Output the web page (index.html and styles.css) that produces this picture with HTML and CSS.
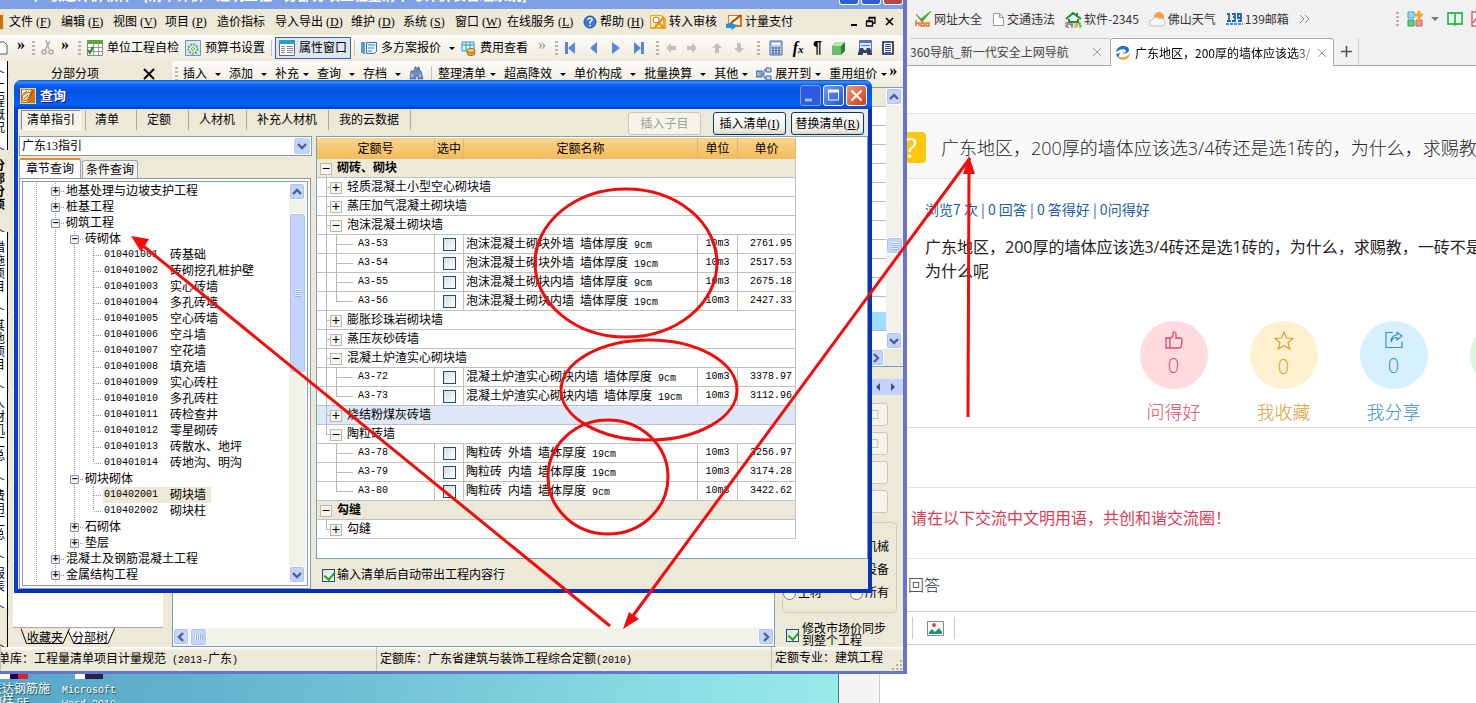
FILE: index.html
```html
<!DOCTYPE html>
<html lang="zh-CN">
<head>
<meta charset="utf-8">
<title>查询</title>
<link rel="stylesheet" href="styles.css">
</head>
<body>
<svg class="defs" width="0" height="0" aria-hidden="true">
  <defs>
    <symbol id="up" viewBox="0 0 16 16"><path d="M4 10l4-4 4 4" fill="none" stroke="#4d6185" stroke-width="2.4"/></symbol>
    <symbol id="down" viewBox="0 0 16 16"><path d="M4 6l4 4 4-4" fill="none" stroke="#4d6185" stroke-width="2.4"/></symbol>
    <symbol id="left" viewBox="0 0 16 16"><path d="M10 4l-4 4 4 4" fill="none" stroke="#4d6185" stroke-width="2.4"/></symbol>
    <symbol id="right" viewBox="0 0 16 16"><path d="M6 4l4 4-4 4" fill="none" stroke="#4d6185" stroke-width="2.4"/></symbol>
    <symbol id="edit" viewBox="0 0 16 16"><path d="M0 0h16v16H0z" fill="#f7d58a"/><path d="M1 1h14v14H1z" fill="#c8741a"/><path d="M2 2h9L8 14H2z" fill="#fdf3d8"/><path d="M2 8l6-4 3 1-4 7-4 1z" fill="#fbe2b0" stroke="#8a4c10" stroke-width=".8"/><path d="M3 6l4-3M4 11l4-4M13 3L7 14" fill="none" stroke="#9b5a14"/></symbol>
    <symbol id="eye" viewBox="0 0 16 16"><path d="M2 5h3l1-4h1l1 4 1-4h1l1 4h1l2 8H9v-3H7v3H1z" fill="#6e8cc0" stroke="#3f5a94" stroke-width=".7"/><path d="M3 8v3M11 8v3" stroke="#dde8fa"/></symbol>
  </defs>
</svg>

<main class="desktop">
  <div class="shortcuts">
    <a class="shortcut shortcut-cut" href="#"><i class="chip chip-red"></i>广联达钢筋施<br>工抽样 <span class="n">GF</span></a>
    <a class="shortcut" href="#"><i class="chip"></i><span class="n">Microsoft<br>Word 2010</span></a>
  </div>
  <div class="backdrop"></div>

  <section class="browser">
    <nav class="bookmarks">
      <a href="#"><svg width="17" height="16" viewBox="0 0 17 16"><path d="M1 3l5 5 10-8-9 11z" fill="#52a92e" stroke="#52a92e"/><path d="M1 9v6M1 12h3v3M6 12h3v3H6zM11 12h3v3h-3z" fill="none" stroke="#ec6a2c" stroke-width="1.4"/></svg>网址大全</a>
      <a href="#"><svg width="13" height="15" viewBox="0 0 13 15"><path d="M1.500 1.500h6l4 4v8h-10zM7.500 1.500v4h4" fill="#fff" stroke="#999"/></svg>交通违法</a>
      <a href="#"><svg width="17" height="17" viewBox="0 0 17 17"><path d="M1 8l7-6 8 6M4 8v3h9V8M12 2v3" fill="none" stroke="#258a33" stroke-width="2"/><path d="M0 12h3v2H1v2h3" fill="none" stroke="#d22"/><path d="M5 12v2h3M7 12v5" fill="none" stroke="#17a"/><path d="M9 12h3v2H9M9 16h3v-2" fill="none" stroke="#e80"/><path d="M16 12h-2v2h2v2h-2" fill="none" stroke="#2a3"/></svg>软件-2345</a>
      <a href="#"><svg width="17" height="16" viewBox="0 0 17 16"><circle cx="10" cy="6" r="5" fill="#f7a23b"/><path d="M3 15a3 3 0 010-6 4 4 0 017-1 3.500 3.500 0 014 7z" fill="#f4f6fa" stroke="#b9c2d0"/></svg>佛山天气</a>
      <a href="#"><svg width="17" height="14" viewBox="0 0 17 14"><path d="M1 2h2v7M1 9h4M6 2h3v3H7h2v4H6M15 6h-3V2h3v7h-3" fill="none" stroke="#1769b5" stroke-width="1.800"/><path d="M0 12h17" stroke="#3d8fd6" stroke-width="2" stroke-dasharray="3 1"/></svg>139邮箱</a>
      <button class="more" type="button" aria-label="更多书签"><svg width="11" height="10" viewBox="0 0 11 10"><path d="M1 1l4 4-4 4M6 1l4 4-4 4" fill="none" stroke="#888"/></svg></button>
      <div class="exts">
        <i class="grip"></i>
        <svg width="16" height="16" viewBox="0 0 16 16"><path d="M1 1h6v6H1z" fill="#9fd8f5" stroke="#3aa2da"/><path d="M1 9h6v6H1z" fill="#5fd48a" stroke="#23a455"/><path d="M9 9h6v6H9z" fill="#f69a90" stroke="#dc5a4c"/><path d="M12 0v8M8 4h8" stroke="#f3a81c" stroke-width="3"/></svg>
        <svg width="8" height="6" viewBox="0 0 8 6"><path d="M0 1h8L4 5z" fill="#777"/></svg>
        <svg width="16" height="16" viewBox="0 0 16 16"><path d="M1 2h6l1 1 1-1h6v11H9l-1 1-1-1H1zM8 3v11" fill="#eafbee" stroke="#2fbd55" stroke-width="1.800"/></svg>
        <svg width="5" height="16" viewBox="0 0 5 16"><path d="M6 1H1v14h5M2 12l5-7" fill="#fff" stroke="#e2605a" stroke-width="1.500"/></svg>
      </div>
    </nav>
    <div class="tabs">
      <div class="tab"><span>360导航_新一代安全上网导航</span><button type="button" aria-label="关闭"><svg width="10" height="10" viewBox="0 0 10 10"><path d="M1 1l8 8M9 1L1 9" stroke="#999"/></svg></button></div>
      <div class="tab tab-on"><svg width="17" height="16" viewBox="0 0 17 16"><path d="M1 7c1-8 13-7 13-2 0 3-4 4-7 3 3 0 4-1 4-2 0-3-7-2-10 1z" fill="#1976c5"/><path d="M2 11c3 6 12 5 13-3-2 4-8 6-13 3z" fill="#f4a11f"/><path d="M1 9l4-1-2 5z" fill="#1976c5"/></svg><span class="tab-name">广东地区，200厚的墙体应该选3/</span><button type="button" aria-label="关闭"><svg width="10" height="10" viewBox="0 0 10 10"><path d="M1 1l8 8M9 1L1 9" stroke="#999"/></svg></button></div>
      <button class="tab-add" type="button" aria-label="新标签"><svg width="11" height="11" viewBox="0 0 11 11"><path d="M5.500 0v11M0 5.500h11" stroke="#555" stroke-width="1.600"/></svg></button>
    </div>
    <article class="page">
      <header class="question">
        <span class="badge">?</span>
        <h1>广东地区，200厚的墙体应该选3/4砖还是选1砖的，为什么，求赐教</h1>
      </header>
      <div class="detail">
        <p class="stats">浏览7 次 | 0 回答 | 0 答得好 | 0问得好</p>
        <p class="body">广东地区，200厚的墙体应该选3/4砖还是选1砖的，为什么，求赐教，一砖不是<br>为什么呢</p>
      </div>
      <div class="votes">
        <button class="vote red" type="button"><span class="disc"><svg width="18" height="18" viewBox="0 0 18 18"><path d="M1 7h4v10H1zM5 8l3-3V2c0-2 3-1 3 1v4h4c2 0 2 1 2 3l-1 6-2 1H5" fill="none" stroke="currentColor" stroke-width="1.300"/></svg>0</span>问得好</button>
        <button class="vote gold" type="button"><span class="disc"><svg width="20" height="19" viewBox="0 0 20 19"><path d="M10 1l2.500 6 6.500.5-5 4 1.800 6.500-5.800-3.500L4.200 18 6 11.500l-5-4L7.500 7z" fill="none" stroke="currentColor" stroke-width="1.200"/></svg>0</span>我收藏</button>
        <button class="vote blue" type="button"><span class="disc"><svg width="18" height="18" viewBox="0 0 18 18"><path d="M8 1.500H1v15h16v-6M6 11c0-4 2-7 6-7V1.500L17 5l-5 4V6.500c-3 0-5 1-6 4.500z" fill="none" stroke="currentColor" stroke-width="1.200"/></svg>0</span>我分享</button>
        <button class="vote green" type="button" aria-label="更多"><span class="disc"></span></button>
      </div>
      <p class="notice">请在以下交流中文明用语，共创和谐交流圈！</p>
      <h2 class="reply">我来回答</h2>
      <div class="editor"><button type="button" aria-label="图片"><svg width="17" height="15" viewBox="0 0 17 15"><path d="M.5.5h16v14H.5z" fill="#fff" stroke="#888"/><circle cx="7" cy="4" r="2" fill="#e4432f"/><path d="M2 13v-2l3-3 3 3 4-4 3 4v2z" fill="#17986a"/></svg></button></div>
    </article>
  </section>

  <section class="app">
    <div class="app-title"><span>广联达计价软件 - [清单计价 - 建筑工程 - 分部分项工程量清单与计价表管理系统]</span><div class="caps"><i></i><i></i><i class="r"></i></div></div>
    <nav class="menu">
      <svg class="menu-logo" width="4" height="16" viewBox="12 0 4 16"><use href="#edit" width="16" height="16"/></svg>
      <button type="button">文件<s>(<u>F</u>)</s></button><button type="button">编辑<s>(<u>E</u>)</s></button><button type="button">视图<s>(<u>V</u>)</s></button><button type="button">项目<s>(<u>P</u>)</s></button><button type="button" class="m-plain">造价指标</button><button type="button" class="m-wide">导入导出<s>(<u>D</u>)</s></button><button type="button">维护<s>(<u>D</u>)</s></button><button type="button">系统<s>(<u>S</u>)</s></button><button type="button">窗口<s>(<u>W</u>)</s></button><button type="button" class="m-wide">在线服务<s>(<u>L</u>)</s></button>
      <button type="button" class="m-help"><svg width="14" height="14" viewBox="0 0 14 14"><circle cx="7" cy="7" r="6" fill="#3c78d4" stroke="#1d4c9c"/><path d="M5 5c0-3 5-2 4 0L7 7v1.500M7 10v1.500" fill="none" stroke="#fff" stroke-width="1.500"/></svg>帮助<s>(<u>H</u>)</s></button>
      <button type="button" class="m-wide"><svg width="16" height="16" viewBox="0 0 16 16"><path d="M0 1h12l4 4v10H0z" fill="#f4a62b"/><path d="M1 2h10l2 3v8H1z" fill="#fdebb8"/><circle cx="6" cy="6" r="3" fill="#fff" stroke="#b87a1e"/><path d="M5 13l9-10M9 9l5 5" stroke="#e0901a" stroke-width="2"/></svg>转入审核</button>
      <button type="button" class="m-wide"><svg width="16" height="16" viewBox="0 0 16 16"><path d="M2 1h14v12H2z" fill="#e6701c"/><path d="M3 2h11v9H3z" fill="#fff3d4"/><path d="M5 9l10-8" stroke="#a5430b" stroke-width="2"/><path d="M0 10l7-2v2l5 1-6 5-1-2H0z" fill="#2d8bd0"/></svg>计量支付</button>
      <div class="mdi"><svg width="44" height="12" viewBox="0 0 44 12"><path d="M0 9h6" stroke="#000" stroke-width="2"/><path d="M18 4V1.500h6V7h-2M15.500 5.500h6V10h-6zM15 5h7M18 2h6" fill="none" stroke="#000" stroke-width="1.300"/><path d="M35 2l7 7M42 2l-7 7" stroke="#000" stroke-width="1.600"/></svg></div>
    </nav>
    <div class="toolbar">
      <div class="band b1"><svg width="8" height="14" viewBox="0 0 8 14"><path d="M0 1h4l3 3v9H0" fill="#fff" stroke="#556"/></svg><b>»</b></div>
      <div class="band b2"><i class="grip"></i><svg width="14" height="16" viewBox="0 0 14 16"><path d="M5 0l3 9M9 1L4 10" stroke="#aaa" stroke-width="1.500"/><circle cx="3" cy="12" r="2" fill="none" stroke="#aaa" stroke-width="1.500"/><circle cx="10" cy="12" r="2" fill="none" stroke="#aaa" stroke-width="1.500"/></svg><b>»</b></div>
      <div class="band b3"><i class="grip"></i>
        <button type="button"><svg width="16" height="16" viewBox="0 0 16 16"><path d="M.5.5h15v15H.5z" fill="#fff" stroke="#888"/><path d="M0 0h16v4H0z" fill="#5aab32"/><path d="M1 7.500h14M1 11.500h14M6.500 4v11M11.500 4v11" stroke="#999"/><path d="M1 10l2 3 3-6" fill="none" stroke="#2e8a1c" stroke-width="2"/></svg>单位工程自检</button>
        <button type="button"><svg width="16" height="16" viewBox="0 0 16 16"><path d="M.5.5h15v15H.5z" fill="#d7e8f5" stroke="#6c94b8"/><circle cx="8" cy="9" r="4.500" fill="#e8f6e4" stroke="#68a56a" stroke-width="2" stroke-dasharray="2 1"/><circle cx="8" cy="9" r="1.500" fill="none" stroke="#68a56a"/></svg>预算书设置</button>
        <i class="sep"></i>
        <button type="button" class="pressed"><svg width="16" height="16" viewBox="0 0 16 16"><path d="M.5.5h15v15H.5z" fill="#fff" stroke="#667"/><path d="M0 0h16v4H0z" fill="#25a0c8"/><path d="M2 6.500h4M2 8.500h4M2 10.500h4M2 12.500h4M8 6.500h6M8 8.500h6M8 10.500h6M8 12.500h6" stroke="#889"/></svg>属性窗口</button>
        <i class="sep"></i>
        <button type="button"><svg width="16" height="14" viewBox="0 0 16 14"><path d="M1 1v11M3 1v12" stroke="#287fc0" stroke-width="1.500"/><path d="M5.500 1.500h10v9l-2 2h-8z" fill="#eaf3fb" stroke="#2a78b8"/><path d="M7 4h7M7 7h6M7 10h4" stroke="#3a86c4"/></svg>多方案报价<i class="caret"></i></button>
        <button type="button"><svg width="15" height="15" viewBox="0 0 15 15"><path d="M1 1h12v9H1z" fill="#d5effb" stroke="#3796bd"/><path d="M1 4h12M5 1v9M9 1v9" stroke="#3796bd"/><ellipse cx="10" cy="12" rx="4" ry="2.500" fill="#e7a73b" stroke="#a56c13"/><ellipse cx="10" cy="9.500" rx="4" ry="2" fill="#f6cc72" stroke="#a56c13"/></svg>费用查看</button>
        <b class="dim">»</b>
      </div>
      <div class="band b4"><i class="grip"></i><svg width="92" height="14" viewBox="0 0 92 14" fill="#5b86dd"><path d="M1 1h3v12H1zM11 1v12L4 7zM33 1v12l-7-6zM48 1v12l8-6zM70 1v12l7-6zM77 1h3v12h-3z"/></svg></div>
      <div class="band b4"><i class="grip"></i><svg width="86" height="14" viewBox="0 0 86 14" fill="#c2c0b8"><path d="M1 7l5-5v3h5v4H6v3zM32 7l-5-5v3h-5v4h5v3zM52 2l5 5h-3v5h-4V7h-3zM74 12l5-5h-3V2h-4v5h-3z"/></svg></div>
      <div class="band b5"><i class="grip"></i>
        <svg width="14" height="16" viewBox="0 0 14 16"><path d="M1 1h12v14H1z" fill="#b8ccf0" stroke="#4a68a8"/><path d="M3 3h8v2H3z" fill="#fff"/><path d="M3 8h8M3 10.500h8M3 13h8" stroke="#35528f" stroke-dasharray="2 1" stroke-width="1.500"/></svg>
        <span class="fx">f<small>x</small></span><span class="pilcrow">¶</span>
        <svg width="15" height="15" viewBox="0 0 15 15"><path d="M1 5l4-4h9v9l-4 4H1z" fill="#2b7d33"/><path d="M1 5h9v9H1z" fill="#68bf6c"/><path d="M1 5l4-4h9l-4 4z" fill="#b7e3b5"/></svg>
        <svg width="17" height="16" viewBox="0 0 17 16"><path d="M3.500.5h12v11h-12z" fill="#dfe8fa" stroke="#5777ba"/><path d="M3 1h13v2H3z" fill="#5777ba"/><path d="M5 5.500h9" stroke="#5777ba"/><path d="M4 8h3l1 2h2l1-2h3l2 5v2h-5v-2H7v2H2v-2z" fill="#34435f"/></svg>
        <svg width="12" height="14" viewBox="0 0 12 14"><path d="M1 1h10v12H1z" fill="#fff" stroke="#223" stroke-width="1.600"/><path d="M3 3.500h6M3 5.500h6M3 7.500h6M3 9.500h6M3 11.500h6" stroke="#1a2fa8" stroke-width=".9"/></svg>
      </div>
    </div>

    <div class="work">
      <div class="side">
        <div class="st s0"></div><div class="st s1"><span>工程概况</span></div><div class="st s2 on"><span>分部分项</span></div><div class="st s3"><span>措施项目</span></div><div class="st s3"><span>其他项目</span></div><div class="st s4"><span>人材机汇总</span></div><div class="st s3"><span>费用汇总</span></div><div class="st s5"><span>报表</span></div><div class="st sx"></div>
      </div>
      <div class="leftpane">
        <div class="pane-head"><span>分部分项</span><svg width="12" height="12" viewBox="0 0 12 12"><path d="M1 1l10 10M11 1L1 11" stroke="#000" stroke-width="2"/></svg></div>
        <div class="pane-body"></div>
        <div class="sheet-tabs"><svg width="100" height="16" viewBox="0 0 100 16"><path d="M46 .5L53 15.500H87L93.500.5" fill="#fff" stroke="#000"/><path d="M0 .5L5.500 15.500H42L48.500.5" fill="#ece9d8" stroke="#000"/></svg><button type="button">收藏夹</button><button type="button">分部树</button></div>
      </div>
      <div class="center">
        <div class="tools2"><i class="grip"></i>
          <button type="button">插入<i class="caret"></i></button><button type="button">添加<i class="caret"></i></button><button type="button" class="tight">补充<i class="caret"></i></button><button type="button">查询<i class="caret"></i></button><button type="button">存档<i class="caret"></i></button>
          <svg width="16" height="16"><use href="#eye"/></svg><i class="sep"></i>
          <button type="button" class="tight">整理清单<i class="caret"></i></button><button type="button">超高降效<i class="caret"></i></button><button type="button">单价构成<i class="caret"></i></button><button type="button">批量换算<i class="caret"></i></button><button type="button" class="tight">其他<i class="caret"></i></button><button type="button" class="tight"><svg width="16" height="14" viewBox="0 0 16 14"><path d="M0 4h6v6H0z" fill="#8fb1e8" stroke="#3b61a8"/><path d="M10 1h5v4h-5zM10 9h5v4h-5z" fill="#c9dbf8" stroke="#3b61a8"/><path d="M6 7h2V3h2M8 7v4h2" fill="none" stroke="#3b61a8"/></svg>展开到<i class="caret"></i></button><button type="button" class="tight last-tool">重用组价<i class="caret"></i></button><b>»</b>
        </div>
        <div class="upper">
          <div class="rows"><i></i><i></i><i></i><i></i><i></i><i></i><i></i><i></i><i></i><i></i><i></i><i></i><i class="hl"></i></div>
          <div class="vscroll up-scroll"><button type="button" aria-label="上"><svg width="16" height="16"><use href="#up"/></svg></button><div class="track"><i class="thumb"></i></div><button type="button" aria-label="下"><svg width="16" height="16"><use href="#down"/></svg></button></div>
        </div>
        <div class="hrow"><button type="button" class="sb" aria-label="右"><svg width="16" height="16"><use href="#right"/></svg></button></div>
        <div class="spin"><svg width="36" height="16" viewBox="0 0 36 16"><path d="M0 0h36v16H0z" fill="#c3d3fd"/><path d="M13 4v8L9 8zM24 4v8l4-4z" fill="#3f4f78"/></svg></div>
        <div class="lower">
          <div class="sheet"><div class="hscroll"><button type="button" aria-label="左"><svg width="16" height="16"><use href="#left"/></svg></button><i class="thumb"></i><span></span><button type="button" aria-label="右"><svg width="16" height="16"><use href="#right"/></svg></button></div></div>
          <div class="props">
            <button class="pb" type="button" disabled>□</button><button class="pb" type="button" disabled>□</button><button class="pb" type="button" disabled></button><button class="pb" type="button" disabled></button>
            <fieldset><label class="end">机械</label><label class="end">设备</label><div class="pair"><label><input type="radio" name="kind">主材</label><label><input type="radio" name="kind">所有</label></div></fieldset>
            <label class="sync"><input type="checkbox" class="xp" checked><span>修改市场价同步<br>到整个工程</span></label>
          </div>
        </div>
      </div>
    </div>
    <footer class="status"><div class="p1"><span>清单库：工程量清单项目计量规范<span class="n"> (2013-</span>广东<span class="n">)</span></span></div><div class="p2">定额库：广东省建筑与装饰工程综合定额<span class="n">(2010)</span></div><div class="p3">定额专业：建筑工程<svg width="12" height="12" viewBox="0 0 12 12"><path d="M9 1h2v2H9zM9 5h2v2H9zM9 9h2v2H9zM5 5h2v2H5zM5 9h2v2H5zM1 9h2v2H1z" fill="#b8b4a2"/></svg></div></footer>
  </section>

  <section class="dialog" role="dialog" aria-label="查询">
    <header class="dlg-title"><svg width="16" height="16"><use href="#edit"/></svg><h2>查询</h2>
      <button type="button" class="min" aria-label="最小化"><svg width="19" height="19" viewBox="0 0 19 19"><path d="M4 14h7" stroke="#9db8f5" stroke-width="3"/></svg></button>
      <button type="button" aria-label="最大化"><svg width="19" height="19" viewBox="0 0 19 19"><path d="M4.500 5h10v9h-10z" fill="none" stroke="#fff"/><path d="M4 5h11" stroke="#fff" stroke-width="3"/></svg></button>
      <button type="button" class="close" aria-label="关闭"><svg width="19" height="19" viewBox="0 0 19 19"><path d="M4.500 4.500l10 10M14.500 4.500l-10 10" stroke="#fff" stroke-width="2.200"/></svg></button></header>
    <div class="dlg-bar">
      <nav><button type="button" class="on">清单指引</button><button type="button">清单</button><button type="button">定额</button><button type="button">人材机</button><button type="button">补充人材机</button><button type="button">我的云数据</button></nav>
      <div class="actions"><button type="button" class="act a1" disabled>插入子目</button><button type="button" class="act">插入清单(<u>I</u>)</button><button type="button" class="act">替换清单(<u>R</u>)</button></div>
    </div>
    <div class="dlg-body">
      <div class="dlg-left">
        <div class="combo"><select aria-label="指引"><option>广东13指引</option></select><svg width="16" height="16"><use href="#down"/></svg></div>
        <div class="subtabs"><button type="button" class="on">章节查询</button><button type="button">条件查询</button></div>
        <div class="tree-frame"><div class="tree">
          <ul>
            <li class="l1"><button type="button">+</button>地基处理与边坡支护工程</li>
            <li class="l1"><button type="button">+</button>桩基工程</li>
            <li class="l1"><button type="button">−</button>砌筑工程</li>
            <li class="l2"><button type="button">−</button>砖砌体</li>
            <li class="l3"><span class="n">010401001  </span>砖基础</li>
            <li class="l3"><span class="n">010401002  </span>砖砌挖孔桩护壁</li>
            <li class="l3"><span class="n">010401003  </span>实心砖墙</li>
            <li class="l3"><span class="n">010401004  </span>多孔砖墙</li>
            <li class="l3"><span class="n">010401005  </span>空心砖墙</li>
            <li class="l3"><span class="n">010401006  </span>空斗墙</li>
            <li class="l3"><span class="n">010401007  </span>空花墙</li>
            <li class="l3"><span class="n">010401008  </span>填充墙</li>
            <li class="l3"><span class="n">010401009  </span>实心砖柱</li>
            <li class="l3"><span class="n">010401010  </span>多孔砖柱</li>
            <li class="l3"><span class="n">010401011  </span>砖检查井</li>
            <li class="l3"><span class="n">010401012  </span>零星砌砖</li>
            <li class="l3"><span class="n">010401013  </span>砖散水、地坪</li>
            <li class="l3 last"><span class="n">010401014  </span>砖地沟、明沟</li>
            <li class="l2"><button type="button">−</button>砌块砌体</li>
            <li class="l3"><mark><span class="n">010402001  </span>砌块墙</mark></li>
            <li class="l3 last"><span class="n">010402002  </span>砌块柱</li>
            <li class="l2"><button type="button">+</button>石砌体</li>
            <li class="l2"><button type="button">+</button>垫层</li>
            <li class="l1"><button type="button">+</button>混凝土及钢筋混凝土工程</li>
            <li class="l1"><button type="button">+</button>金属结构工程</li>
          </ul>
          <div class="vscroll tree-scroll"><button type="button" aria-label="上"><svg width="16" height="16"><use href="#up"/></svg></button><div class="track"><i class="thumb"></i></div><button type="button" aria-label="下"><svg width="16" height="16"><use href="#down"/></svg></button></div>
        </div></div>
      </div>
      <div class="dlg-right">
        <div class="grid">
          <table>
            <colgroup><col class="c1"><col class="c2"><col class="c3"><col class="c4"><col class="c5"></colgroup>
            <thead><tr><th>定额号</th><th>选中</th><th>定额名称</th><th>单位</th><th>单价</th></tr></thead>
            <tbody>
              <tr class="top"><td colspan="5"><button type="button">−</button>砌砖、砌块</td></tr>
              <tr class="grp"><td colspan="5"><button type="button">+</button>轻质混凝土小型空心砌块墙</td></tr>
              <tr class="grp"><td colspan="5"><button type="button">+</button>蒸压加气混凝土砌块墙</td></tr>
              <tr class="grp"><td colspan="5"><button type="button">−</button>泡沫混凝土砌块墙</td></tr>
              <tr class="leaf"><td>A3-53</td><td><input type="checkbox" class="xp" aria-label="A3-53"></td><td>泡沫混凝土砌块外墙<span class="n"> </span>墙体厚度<span class="n"> 9cm</span></td><td>10m3</td><td>2761.95</td></tr>
              <tr class="leaf"><td>A3-54</td><td><input type="checkbox" class="xp" aria-label="A3-54"></td><td>泡沫混凝土砌块外墙<span class="n"> </span>墙体厚度<span class="n"> 19cm</span></td><td>10m3</td><td>2517.53</td></tr>
              <tr class="leaf"><td>A3-55</td><td><input type="checkbox" class="xp" aria-label="A3-55"></td><td>泡沫混凝土砌块内墙<span class="n"> </span>墙体厚度<span class="n"> 9cm</span></td><td>10m3</td><td>2675.18</td></tr>
              <tr class="leaf end"><td>A3-56</td><td><input type="checkbox" class="xp" aria-label="A3-56"></td><td>泡沫混凝土砌块内墙<span class="n"> </span>墙体厚度<span class="n"> 19cm</span></td><td>10m3</td><td>2427.33</td></tr>
              <tr class="grp"><td colspan="5"><button type="button">+</button>膨胀珍珠岩砌块墙</td></tr>
              <tr class="grp"><td colspan="5"><button type="button">+</button>蒸压灰砂砖墙</td></tr>
              <tr class="grp"><td colspan="5"><button type="button">−</button>混凝土炉渣实心砌块墙</td></tr>
              <tr class="leaf"><td>A3-72</td><td><input type="checkbox" class="xp" aria-label="A3-72"></td><td>混凝土炉渣实心砌块内墙<span class="n"> </span>墙体厚度<span class="n"> 9cm</span></td><td>10m3</td><td>3378.97</td></tr>
              <tr class="leaf end"><td>A3-73</td><td><input type="checkbox" class="xp" aria-label="A3-73"></td><td>混凝土炉渣实心砌块内墙<span class="n"> </span>墙体厚度<span class="n"> 19cm</span></td><td>10m3</td><td>3112.96</td></tr>
              <tr class="grp cur"><td colspan="5"><button type="button">+</button>烧结粉煤灰砖墙</td></tr>
              <tr class="grp fin"><td colspan="5"><button type="button">−</button>陶粒砖墙</td></tr>
              <tr class="leaf nov"><td>A3-78</td><td><input type="checkbox" class="xp" aria-label="A3-78"></td><td>陶粒砖<span class="n"> </span>外墙<span class="n"> </span>墙体厚度<span class="n"> 19cm</span></td><td>10m3</td><td>3256.97</td></tr>
              <tr class="leaf nov"><td>A3-79</td><td><input type="checkbox" class="xp" aria-label="A3-79"></td><td>陶粒砖<span class="n"> </span>内墙<span class="n"> </span>墙体厚度<span class="n"> 19cm</span></td><td>10m3</td><td>3174.28</td></tr>
              <tr class="leaf nov end"><td>A3-80</td><td><input type="checkbox" class="xp" aria-label="A3-80"></td><td>陶粒砖<span class="n"> </span>内墙<span class="n"> </span>墙体厚度<span class="n"> 9cm</span></td><td>10m3</td><td>3422.62</td></tr>
              <tr class="top"><td colspan="5"><button type="button">−</button>勾缝</td></tr>
              <tr class="grp fin"><td colspan="5"><button type="button">+</button>勾缝</td></tr>
            </tbody>
          </table>
        </div>
        <label class="auto"><input type="checkbox" class="xp" checked>输入清单后自动带出工程内容行</label>
      </div>
    </div>
  </section>

  <svg class="marks" width="1476" height="703" viewBox="0 0 1476 703" aria-hidden="true">
    <g fill="none" stroke="#f20d0d" stroke-width="3">
      <ellipse cx="626" cy="263" rx="91" ry="74"/><ellipse cx="649" cy="390" rx="88" ry="50"/><ellipse cx="608" cy="477" rx="60" ry="57"/>
      <path d="M610 626L142 245M970 158L632 617M968 417L969 170"/>
    </g>
    <path d="M131 236l18 3-8 13zM623 629l6-17 10 7zM969 156l-6 18h12z" fill="#f20d0d"/>
  </svg>
</main>
</body>
</html>
```
FILE: styles.css
```css
* { box-sizing: border-box; }
body { margin: 0; font: 12px/16px "Liberation Serif", "Noto Sans CJK SC", sans-serif; color: #000; overflow: hidden; }
button, select, input { font: inherit; color: inherit; margin: 0; padding: 0; }
button { border: 0; background: none; white-space: nowrap; }
svg { display: block; flex: none; }
h1, h2, p, ul { margin: 0; padding: 0; font-weight: normal; }
a { color: inherit; text-decoration: none; }
s { text-decoration: none; }
.defs { position: absolute; }
.n { font: 10px/12px "Liberation Mono", "Noto Sans CJK SC", monospace; white-space: pre; }
.desktop { position: relative; height: 100vh; overflow: hidden; background: linear-gradient(100deg, #4f9fc4, #63b3cf 20%, #77c7d8 35%, #8adfe4 50%, #a9f4ee 70%); }
.grip { width: 3px; height: 15px; flex: none; background: repeating-linear-gradient(#b9b6a8 0 2px, transparent 2px 4px); }
.sep { width: 1px; height: 16px; flex: none; background: #c5c2b4; }
.caret { border: 3px solid transparent; border-top-color: #000; border-bottom: 0; flex: none; }

/* desktop */
.shortcuts { position: absolute; left: 0; bottom: 0; height: 29px; display: flex; gap: 12px; color: #fff; overflow: hidden; text-align: center; line-height: 12px; text-shadow: 1px 1px 1px #244; }
.shortcut { display: block; }
.shortcut-cut { margin-left: -22px; text-align: left; }
.chip { display: block; width: 28px; height: 5px; margin: 0 auto 4px; background: linear-gradient(90deg, #fff 10px, #224 10px); }
.chip-red { background: linear-gradient(90deg, #fff 10px, #205 10px 18px, #d23 18px); }
.backdrop { position: absolute; left: 838px; width: 42px; top: 0; bottom: 0; background: #f5f5f5; border: solid #c8cccc; border-width: 0 1px; border-left-color: #3d7f86; }

/* browser */
.browser { position: absolute; left: 880px; right: 0; top: 0; bottom: 0; background: #fff; overflow: hidden; font-family: "Noto Sans CJK SC", sans-serif; }
.bookmarks { height: 38px; background: #f1f1f1; display: flex; align-items: center; padding-left: 35px; gap: 10px; color: #333; }
.bookmarks a { display: flex; align-items: center; gap: 2px; white-space: nowrap; }
.exts { margin-left: auto; display: flex; align-items: center; gap: 8px; }
.tabs { height: 28px; background: #f1f1f1; border-bottom: 1px solid #aaa; display: flex; padding-left: 30px; }
.tab { width: 200px; flex: none; display: flex; align-items: center; justify-content: space-between; padding-right: 8px; color: #444; border-top: 1px solid #ccc; white-space: nowrap; }
.tab-on { width: 224px; padding: 0 6px 0 4px; margin-bottom: -1px; background: #fff; color: #000; border: 1px solid #aaa; border-bottom: 0; border-radius: 4px 4px 0 0; gap: 3px; }
.tab-name { flex: 1; overflow: hidden; background: linear-gradient(90deg, #000 160px, #bbb); -webkit-background-clip: text; background-clip: text; color: transparent; }
.tab-add { width: 25px; border-right: 1px solid #ccc; display: flex; align-items: center; justify-content: center; }
.page { font-family: "Open Sans", "Noto Sans CJK SC", sans-serif; font-weight: 300; font-size: 16px; line-height: 24px; color: #333; }
.question { margin-top: 47px; height: 66px; border: solid #e3e3e3; border-width: 1px 0; background: #f9f9f9; display: flex; align-items: center; gap: 15px; padding: 3px 0 0 16px; white-space: nowrap; }
.badge { width: 30px; height: 31px; flex: none; border-radius: 4px; background: #ffc60a; color: #fff; font-size: 28px; line-height: 31px; text-align: center; font-weight: 400; }
.question h1 { font-size: 18px; font-weight: 300; color: #222; }
.detail { padding: 18px 0 0 45px; white-space: nowrap; }
.stats { font-family: "Noto Sans CJK SC", sans-serif; font-size: 14px; color: #1c5ea8; }
.body { margin-top: 14px; color: #222; }
.votes { display: flex; gap: 31px; margin-top: 38px; padding-left: 254px; border-bottom: 1px solid #ddd; height: 107px; }
.vote { width: 79px; flex: none; font-size: 18px; display: flex; flex-direction: column; align-items: center; gap: 11px; }
.disc { width: 68px; height: 68px; flex: none; border-radius: 50%; display: flex; flex-direction: column; align-items: center; padding-top: 10px; gap: 5px; line-height: 24px; font-size: 20px; }
.red { color: #dd4a64; } .red .disc { background: #ffdbe0; }
.gold { color: #d9a031; } .gold .disc { background: #fff0cf; }
.blue { color: #368fcb; } .blue .disc { background: #d6f0ff; }
.green .disc { background: #d9f5dc; }
.notice { margin-top: 59px; height: 72px; border: solid #e3e3e3; border-width: 1px 0; padding: 18px 0 0 31px; color: #dc3c55; }
.reply { font-size: 16px; font-weight: 300; height: 52px; line-height: 52px; margin-left: -4px; }
.editor { border: solid #ccc; border-width: 1px 0; height: 34px; padding: 5px 0 5px 32px; }
.editor button { width: 43px; height: 22px; border: solid #ccc; border-width: 0 1px; padding-left: 14px; }

/* application window */
.app { position: absolute; left: 0; top: 0; width: 907px; background: #ece9d8; border: solid #6474cf; border-width: 0 4px 3px 0; display: flex; flex-direction: column; }
.app button { flex: none; }
.app-title { height: 9px; background: #7f9fe6; color: #fff; font-size: 14px; font-weight: bold; overflow: hidden; display: flex; justify-content: space-between; line-height: 16px; padding-left: 34px; white-space: nowrap; }
.app-title span { margin-top: -12px; }
.caps { display: flex; gap: 2px; }
.caps i { width: 20px; height: 5px; border: 1px solid #fff; border-top: 0; border-radius: 0 0 3px 3px; background: #2f5fd8; }
.caps .r { background: #b8474d; }
.menu { height: 26px; display: flex; align-items: center; }
.menu-logo { margin-right: 5px; }
.menu button { display: flex; align-items: center; gap: 3px; width: 52px; height: 20px; }
.menu .m-plain { width: 58px; }
.menu .m-wide { width: 76px; }
.menu .m-help { width: 67px; }
.mdi { margin: 0 8px 0 auto; }
.toolbar { height: 26px; display: flex; align-items: center; background: #f4f2e8; }
.band { height: 26px; display: flex; align-items: center; background: linear-gradient(#fdfcf9, #eeebdd); border-radius: 0 4px 4px 0; }
.band b, .tools2 b { font-size: 16px; font-weight: bold; line-height: 16px; padding-bottom: 6px; }
.band .dim { color: #999; font-weight: normal; margin-left: 4px; }
.b1 { width: 32px; gap: 9px; } .b2 { width: 46px; gap: 6px; } .b3 { width: 477px; gap: 6px; } .b4 { width: 101px; gap: 6px; } .b5 { flex: 1; gap: 7px; }
.toolbar button { display: flex; align-items: center; gap: 4px; height: 22px; }
.toolbar button .caret { margin: 0 0 0 4px; }
.toolbar .pressed { border: 1px solid #3c62b0; background: #dde5f0; padding: 0 3px; margin: 0 -3px; }
.b5 { justify-content: space-between; padding-right: 9px; }
.fx { font: italic bold 16px/20px "Liberation Serif", serif; } .fx small { font-size: 11px; }
.pilcrow { font: bold 16px/20px "Liberation Sans", sans-serif; }
.work { display: grid; grid-template-columns: 13px 152px minmax(0, 1fr); height: 586px; }
.side { overflow: hidden; display: flex; flex-direction: column; }
.st { width: 8px; background: linear-gradient(30deg, transparent, transparent), #fff; border-right: 1px solid #000; position: relative; }
.st::after { content: ""; position: absolute; left: -3px; bottom: 0; width: 12px; height: 1px; background: #222; transform: rotate(30deg); }
.st span { display: block; width: 12px; line-height: 13px; margin-left: -7px; padding-top: 10px; word-break: break-all; text-align: center; }
.st.on { background: #ece9d8; border-right-color: #ece9d8; font-weight: bold; }
.s0 { height: 12px; } .s1 { height: 77px; } .s2 { height: 82px; } .s3 { height: 78px; } .s4 { height: 92px; } .s5 { height: 50px; } .sx { flex: 1; background: #ece9d8; }
.leftpane { display: flex; flex-direction: column; }
.pane-head { height: 26px; display: flex; align-items: center; justify-content: space-between; padding: 0 10px 0 38px; }
.pane-body { flex: 1; background: #fff; border-bottom: 1px solid #aaa; margin-right: 2px; }
.sheet-tabs { position: relative; height: 19px; display: flex; gap: 9px; padding-left: 14px; }
.sheet-tabs svg { position: absolute; left: 8px; top: 0; }
.sheet-tabs button { position: relative; }
.center { display: flex; flex-direction: column; padding-left: 7px; }
.tools2 { height: 26px; display: flex; align-items: center; background: linear-gradient(#fdfcf9, #eeebdd); padding-left: 3px; }
.tools2 .grip { margin-right: 5px; }
.tools2 button { display: flex; align-items: center; height: 20px; padding-right: 8px; }
.tools2 button svg { margin-right: 3px; }
.tools2 .caret { margin-left: 8px; }
.tools2 .tight .caret { margin-left: 4px; }
.tools2 .sep { margin: 0 6px; }
.tools2 .last-tool { padding-right: 2px; }
.upper { display: flex; height: 262px; border-top: 1px solid #8a9aa8; background: #fff; }
.rows { flex: 1; }
.rows i { display: block; height: 19px; border-bottom: 1px solid #bbb; }
.rows i:first-child { background: #ece9d8; }
.rows .hl { background: #9fdcff; margin-top: -4px; }
.hrow { height: 18px; display: flex; justify-content: flex-end; padding-right: 19px; border-bottom: 1px solid #7f9db9; }
.spin { height: 35px; display: flex; justify-content: flex-end; padding-top: 12px; }
.lower { flex: 1; display: flex; }
.sheet { flex: 1; background: #fff; border: solid #7f9db9; border-width: 0 1px 1px; display: flex; align-items: flex-end; }
.props { width: 128px; padding: 1px 6px 0 7px; display: flex; flex-direction: column; align-items: stretch; }
.props .pb { height: 23px; margin: 0 9px 6px 0; border: 1px solid #c9c7ba; border-radius: 3px; background: #f5f4ea; text-align: right; padding-right: 9px; color: #99a; font-size: 14px; line-height: 14px; }
.props fieldset { margin: 3px 0 0; border: 1px solid #d0cdbf; border-radius: 4px; padding: 16px 7px 8px 0; height: 91px; display: flex; flex-direction: column; gap: 7px; text-align: right; }
.pair { display: flex; justify-content: space-between; }
.pair label { display: flex; align-items: center; gap: 2px; }
.pair input { width: 13px; height: 13px; }
.sync { display: flex; align-items: center; gap: 3px; margin-top: 10px; padding-left: 4px; line-height: 12px; white-space: nowrap; }
.xp { appearance: none; width: 13px; height: 13px; flex: none; border: 1px solid #1c5180; background: linear-gradient(135deg, #dcdcd7, #fff); position: relative; display: block; }
.xp:checked::after { content: ""; position: absolute; left: 3px; top: 0; width: 5px; height: 8px; border: solid #21a121; border-width: 0 2px 2px 0; transform: rotate(40deg); }
.status { height: 24px; display: flex; background: linear-gradient(#fff, #ece9d8 4px); white-space: nowrap; line-height: 25px; }
.status div { border-left: 1px solid #c5c2b4; padding-left: 3px; overflow: hidden; }
.status .p3 { flex: 1; display: flex; justify-content: space-between; align-items: flex-end; }
.p1 { width: 376px; } .p1 > span { margin-left: -18px; } .p2 { width: 395px; }

/* scrollbars */
.vscroll { width: 17px; flex: none; display: flex; flex-direction: column; background: #f3f2ea; }
.vscroll .track { flex: 1; }
.vscroll button, .hscroll button, .sb { width: 16px; height: 17px; border: 1px solid #fff; border-radius: 3px; background: #c3d3fd; overflow: hidden; box-shadow: inset 0 0 0 1px #b0c4f2; display: flex; align-items: center; justify-content: center; }
.thumb { display: block; border: 1px solid #fff; border-radius: 3px; background: repeating-linear-gradient(#eef4fe 0 1px, #8cb0f8 1px 2px) center / 6px 8px no-repeat, #c3d3fd; box-shadow: inset 0 0 0 1px #b0c4f2; }
.up-scroll .thumb { height: 17px; margin-top: 132px; }
.tree-scroll .thumb { height: 160px; margin-top: 13px; }
.hscroll { flex: 1; height: 18px; display: flex; background: #f3f2ea; gap: 1px; }
.hscroll span { flex: 1; }
.hscroll .thumb { width: 17px; background: repeating-linear-gradient(90deg, #eef4fe 0 1px, #8cb0f8 1px 2px) center / 8px 6px no-repeat, #c3d3fd; }

/* query dialog */
.dialog { position: absolute; left: 14px; top: 80px; width: 858px; background: #ece9d8; border: solid #0a3fd6; border-width: 0 4px 4px; border-right-color: #0433b8; border-bottom-color: #0433b8; border-radius: 8px 8px 0 0; }
.dlg-title { height: 29px; margin: 0 -4px; padding: 2px 5px 0 6px; border-radius: 7px 7px 0 0; background: linear-gradient(#0450d8, #3a90ff 2px, #0a5cf0 5px, #0353e1 12px, #0363fb 24px, #0140c4); display: flex; align-items: center; gap: 2px; color: #fff; }
.dlg-title h2 { flex: 1; font-size: 13px; font-weight: bold; padding-left: 2px; text-shadow: 1px 1px #0a1883; }
.dlg-title button { width: 21px; height: 21px; border: 1px solid #fff; border-radius: 3px; background: linear-gradient(135deg, #6f9cff, #1f55d8); }
.dlg-title .min { border-color: #7f9fe8; background: #2c5be0; }
.dlg-title .close { background: linear-gradient(135deg, #f0967b, #cf3b14); }
.dlg-bar { display: flex; justify-content: space-between; height: 27px; padding: 1px 4px 0 3px; }
.dlg-bar nav { display: flex; height: 20px; }
.dlg-bar nav button { min-width: 52px; padding: 0 11px 0 10px; border-right: 1px solid #aca899; text-align: left; }
.dlg-bar nav .on { padding: 0; width: 60px; text-align: center; border: 1px solid #fff; border-top-color: #888; border-left-color: #888; background: #f5f3ec; margin-right: 4px; box-shadow: 4px 0 #ece9d8, 5px 0 #aca899; }
.actions { display: flex; gap: 5px; padding-top: 2px; height: 25px; }
.act { width: 73px; border: 1px solid #003c74; border-radius: 3px; background: linear-gradient(#fff, #ecebe5 85%, #d6d0c5); }
.act:disabled { color: #a1a192; border-color: #c9c7ba; background: #f5f4ea; margin-right: 7px; }
.dlg-body { display: flex; }
.dlg-left { width: 294px; flex: none; padding-left: 1px; margin-right: 4px; }
.combo { display: flex; align-items: center; height: 20px; border: 1px solid #7f9db9; background: #fff; padding-right: 1px; }
.combo select { appearance: none; flex: 1; border: 0; background: none; padding-left: 2px; height: 18px; }
.combo svg { background: #c3d3fd; border-radius: 2px; }
.subtabs { display: flex; align-items: flex-end; height: 22px; gap: 1px; }
.subtabs button { height: 18px; padding: 0 3px; border: 1px solid #91a7b4; border-bottom: 0; border-radius: 3px 3px 0 0; background: #f4f3ee; }
.subtabs .on { height: 20px; padding: 0 6px; background: #fcfcfe; border-top: 2px solid #e68b2c; }
.tree-frame { border: 1px solid #919b9c; background: #fcfcfe; padding: 2px; margin-right: 1px; }
.tree { display: flex; border: 1px solid #7f9db9; background: #fff; padding: 1px 1px 2px 0; }
.tree ul { flex: 1; list-style: none; }
.tree li { height: 16px; display: flex; align-items: center; white-space: nowrap; --v: repeating-linear-gradient(#999 0 1px, transparent 1px 2px); --h: repeating-linear-gradient(90deg, #999 0 1px, transparent 1px 2px); background-repeat: no-repeat; }
.l1 { padding-left: 28px; background: var(--v) 13px 0 / 1px 16px, var(--v) 32px 0 / 1px 16px, var(--h) 38px 8px / 4px 1px; }
.l2 { padding-left: 47px; background: var(--v) 13px 0 / 1px 16px, var(--v) 32px 0 / 1px 16px, var(--v) 51px 0 / 1px 16px, var(--h) 57px 8px / 4px 1px; }
.l3 { padding-left: 81px; background: var(--v) 13px 0 / 1px 16px, var(--v) 32px 0 / 1px 16px, var(--v) 51px 0 / 1px 16px, var(--v) 70px 0 / 1px 16px, var(--h) 71px 8px / 8px 1px; }
.last { background-size: 1px 16px, 1px 16px, 1px 16px, 1px 8px, 8px 1px; }
.tree .n { line-height: 16px; }
.tree li button { width: 9px; height: 9px; border: 1px solid #7b8fa6; border-radius: 1px; background: #f2f1ec; font: bold 10px/7px "Liberation Mono", monospace; margin-right: 6px; display: flex; align-items: center; justify-content: center; flex: none; }
mark { background: #ece9d8; color: inherit; height: 16px; display: flex; align-items: center; margin-left: -1px; padding: 0 5px 0 1px; }
.dlg-right { flex: 1; display: flex; flex-direction: column; }
.grid { flex: 1; border: 1px solid #7f9db9; background: #fff; padding-top: 1px; }
table { border-collapse: separate; border-spacing: 0; table-layout: fixed; width: 479px; }
.c1 { width: 118px; } .c2 { width: 29px; } .c3 { width: 234px; } .c4 { width: 40px; } .c5 { width: 58px; }
th { height: 21px; padding: 0; font-weight: normal; background: linear-gradient(#fbd48c, #f3bb5c); border-right: 1px solid #d9b97c; }
td { height: 19px; padding: 0; border: solid #c0c0c0; border-width: 0 1px 1px 0; white-space: nowrap; line-height: 18px; }
td button { display: inline-flex; width: 12px; height: 12px; border: 1px solid #b8b8b0; background: #f7f6f0; align-items: center; justify-content: center; font: 14px/10px "Liberation Mono", monospace; vertical-align: middle; margin-right: 5px; }
.top td { background: #ece9d8; font-weight: bold; padding-left: 3px; }
.grp td { padding-left: 13px; --l: linear-gradient(#b8b8b8, #b8b8b8); background: var(--l) 9px 0 / 1px 19px no-repeat, var(--l) 9px 9px / 4px 1px no-repeat; }
.grp.fin td { background-size: 1px 9px, 4px 1px; }
.grp.cur td { background-color: #dfe8f6; }
.leaf td:first-child { --l: linear-gradient(#b8b8b8, #b8b8b8); padding-left: 41px; background: var(--l) 19px 0 / 1px 18px no-repeat, var(--l) 19px 9px / 17px 1px no-repeat, var(--l) 9px 0 / 1px 19px no-repeat; }
.leaf.end td:first-child { background-size: 1px 9px, 17px 1px, 1px 19px; }
.leaf.nov td:first-child { background-size: 1px 18px, 17px 1px, 0 0; }
.leaf.nov.end td:first-child { background-size: 1px 9px, 17px 1px, 0 0; }
.leaf td:first-child, .leaf td:nth-child(4), .leaf td:nth-child(5) { font: 10px/18px "Liberation Mono", monospace; }
.leaf td:nth-child(3) { padding-left: 2px; }
.leaf td:nth-child(4) { text-align: center; }
.leaf td:nth-child(5) { text-align: right; padding-right: 3px; }
.leaf .xp { margin: 0 auto; }
.auto { display: flex; align-items: center; gap: 2px; height: 30px; padding: 2px 0 0 6px; }

.marks { position: absolute; left: 0; top: 0; pointer-events: none; }
```
